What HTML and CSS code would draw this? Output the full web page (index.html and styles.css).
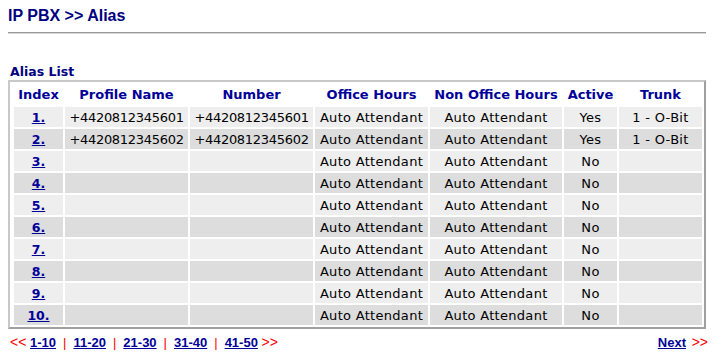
FILE: index.html
```html
<!DOCTYPE html>
<html>
<head>
<meta charset="utf-8">
<link rel="stylesheet" href="styles.css">
</head>
<body>
<div class="page">
  <h1 class="title">IP PBX &gt;&gt; Alias</h1>
  <div class="rule"></div>
  <div class="section-title">Alias List</div>
  <div class="box">
    <table class="list">
      <colgroup>
        <col class="c-idx"><col class="c-prof"><col class="c-num"><col class="c-off"><col class="c-non"><col class="c-act"><col class="c-trk">
      </colgroup>
      <thead>
        <tr><th>Index</th><th>Profile Name</th><th>Number</th><th>Office Hours</th><th>Non Office Hours</th><th>Active</th><th>Trunk</th></tr>
      </thead>
      <tbody>
        <tr class="odd"><td><a href="#">1.</a></td><td class="num">+4420812345601</td><td class="num">+4420812345601</td><td class="txt">Auto Attendant</td><td class="txt">Auto Attendant</td><td class="txt">Yes</td><td class="txt">1 - O-Bit</td></tr>
        <tr class="even"><td><a href="#">2.</a></td><td class="num">+4420812345602</td><td class="num">+4420812345602</td><td class="txt">Auto Attendant</td><td class="txt">Auto Attendant</td><td class="txt">Yes</td><td class="txt">1 - O-Bit</td></tr>
        <tr class="odd"><td><a href="#">3.</a></td><td></td><td></td><td class="txt">Auto Attendant</td><td class="txt">Auto Attendant</td><td class="txt">No</td><td></td></tr>
        <tr class="even"><td><a href="#">4.</a></td><td></td><td></td><td class="txt">Auto Attendant</td><td class="txt">Auto Attendant</td><td class="txt">No</td><td></td></tr>
        <tr class="odd"><td><a href="#">5.</a></td><td></td><td></td><td class="txt">Auto Attendant</td><td class="txt">Auto Attendant</td><td class="txt">No</td><td></td></tr>
        <tr class="even"><td><a href="#">6.</a></td><td></td><td></td><td class="txt">Auto Attendant</td><td class="txt">Auto Attendant</td><td class="txt">No</td><td></td></tr>
        <tr class="odd"><td><a href="#">7.</a></td><td></td><td></td><td class="txt">Auto Attendant</td><td class="txt">Auto Attendant</td><td class="txt">No</td><td></td></tr>
        <tr class="even"><td><a href="#">8.</a></td><td></td><td></td><td class="txt">Auto Attendant</td><td class="txt">Auto Attendant</td><td class="txt">No</td><td></td></tr>
        <tr class="odd"><td><a href="#">9.</a></td><td></td><td></td><td class="txt">Auto Attendant</td><td class="txt">Auto Attendant</td><td class="txt">No</td><td></td></tr>
        <tr class="even"><td><a href="#">10.</a></td><td></td><td></td><td class="txt">Auto Attendant</td><td class="txt">Auto Attendant</td><td class="txt">No</td><td></td></tr>
      </tbody>
    </table>
  </div>
  <div class="pager">
    <div class="pages">
      <span class="arrow">&lt;&lt;</span>
      <a href="#">1-10</a><span class="sep">|</span><a href="#">11-20</a><span class="sep">|</span><a href="#">21-30</a><span class="sep">|</span><a href="#">31-40</a><span class="sep">|</span><a href="#">41-50</a>
      <span class="arrow">&gt;&gt;</span>
    </div>
    <div class="next">
      <a href="#">Next</a> <span class="arrow">&gt;&gt;</span>
    </div>
  </div>
</div>
</body>
</html>
```

FILE: styles.css
```css
html, body {
  margin: 0;
  padding: 0;
  background: #ffffff;
}

.page {
  padding: 0 8px;
  width: 698px;
}

.title {
  margin: 0;
  padding-top: 6px;
  height: 20px;
  font-family: "Liberation Sans", Arial, sans-serif;
  font-size: 16px;
  line-height: 20px;
  font-weight: bold;
  color: #000080;
}

.rule {
  margin-top: 6px;
  border-top: 1px solid #999999;
  border-bottom: 1px solid #d8d8d8;
  height: 0;
}

.section-title {
  margin-top: 30px;
  padding-left: 2px;
  height: 16px;
  font-family: "DejaVu Sans", Verdana, sans-serif;
  font-size: 12.5px;
  line-height: 16px;
  font-weight: bold;
  color: #000080;
}

.box {
  border: 2px solid;
  border-color: #c8c8c8 #a0a0a0 #a0a0a0 #c8c8c8;
  padding-left: 2px;
}

.list {
  table-layout: fixed;
  border-collapse: separate;
  border-spacing: 2px;
  font-family: "DejaVu Sans", Verdana, sans-serif;
  font-size: 13px;
  color: #000000;
}

.c-idx { width: 49px; }
.c-prof { width: 123px; }
.c-num { width: 123px; }
.c-off { width: 113px; }
.c-non { width: 132px; }
.c-act { width: 53px; }
.c-trk { width: 83px; }

.list th {
  height: 21px;
  padding: 0;
  font-size: 13px;
  font-weight: bold;
  color: #000099;
  text-align: center;
  white-space: nowrap;
}

.list td {
  height: 20px;
  padding: 0;
  text-align: center;
  white-space: nowrap;
}

.list td.num {
  letter-spacing: -0.3px;
}

.list td.txt {
  letter-spacing: 0.3px;
}

.odd td { background: #eeeeee; }
.even td { background: #dddddd; }

.list a {
  color: #000099;
  font-weight: bold;
  text-decoration: underline;
  font-size: 12.5px;
}

.pager {
  display: flex;
  justify-content: space-between;
  align-items: center;
  margin-top: 5px;
  margin-right: -2px;
  padding-left: 2px;
  font-family: "Liberation Sans", Arial, sans-serif;
  font-size: 13px;
  line-height: 16px;
}

.pager a {
  color: #000099;
  font-weight: bold;
  text-decoration: underline;
}

.pager .arrow {
  color: #ff0000;
  font-size: 14px;
}

.pager .sep {
  color: #ff0000;
  margin: 0 7px;
}

.next .arrow {
  margin-left: 2px;
}
```
